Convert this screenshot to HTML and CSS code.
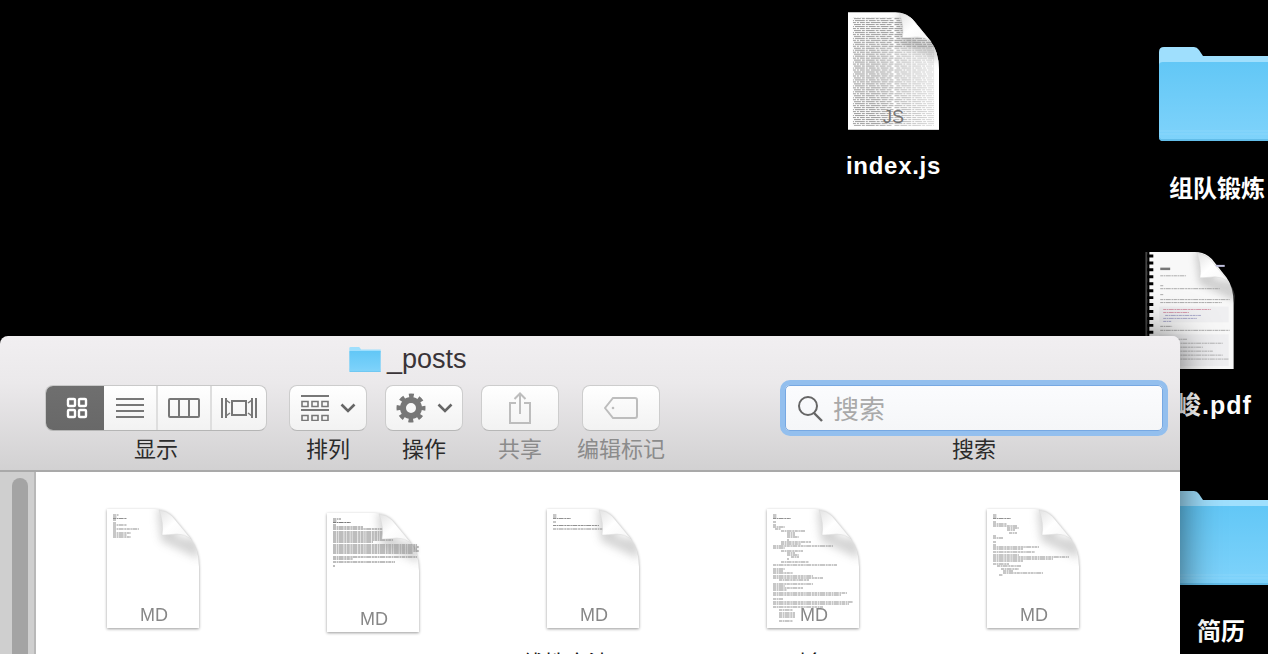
FILE: index.html
```html
<!DOCTYPE html>
<html lang="zh">
<head>
<meta charset="utf-8">
<title>_posts</title>
<link rel="stylesheet" href="styles.css">
</head>
<body>
<svg class="defs" width="0" height="0" aria-hidden="true">
  <defs>
    <linearGradient id="folderFront" x1="0" y1="0" x2="0" y2="1">
      <stop offset="0" stop-color="#62c7f6"/><stop offset="1" stop-color="#7fd3fb"/>
    </linearGradient>
    <linearGradient id="foldFill" x1="0" y1="0" x2="1" y2="1">
      <stop offset="0" stop-color="#e2e2e2"/><stop offset="0.45" stop-color="#ffffff"/><stop offset="1" stop-color="#f6f6f6"/>
    </linearGradient>
    <linearGradient id="codeFade" x1="0" y1="0" x2="1" y2="0">
      <stop offset="0.3" stop-color="#fff" stop-opacity="0"/><stop offset="1" stop-color="#fff" stop-opacity=".7"/>
    </linearGradient>
    <filter id="soft" x="-40%" y="-40%" width="180%" height="180%"><feGaussianBlur stdDeviation="4"/></filter>
    <clipPath id="pageClip"><path d="M0 0H48Q58 0 65 7L83 29Q92 40 92 58V119H0Z"/></clipPath>
    <pattern id="denseCode" width="47" height="6" patternUnits="userSpaceOnUse">
      <rect width="47" height="6" fill="#fff"/>
      <path d="M0 .6h5m1 0h7m1 0h3m1 0h9m1 0h3m1 0h6m1 0h5M2 2.600h4m1 0h10m1 0h2m1 0h7m1 0h3m1 0h8m1 0h4M0 4.600h8m1 0h2m1 0h5m1 0h4m1 0h10m1 0h6m1 0h5" stroke="#7c7c7c" stroke-width=".8"/>
    </pattern>
    <symbol id="folder" viewBox="0 0 118 94">
      <path d="M0 5Q0 0 5 0H35Q38 0 40 3L44 9H118V20H0Z" fill="#9fdffd"/>
      <path d="M0 18Q0 15 4 15H118V94H4Q0 94 0 90Z" fill="url(#folderFront)"/>
      <path d="M0 84H118M0 87H118" stroke="#8ad6fb" stroke-width="1"/>
      <path d="M0 90Q0 94 4 94H118V92H2Z" fill="#62bde9"/>
    </symbol>
    <symbol id="page" viewBox="0 0 92 119">
      <path d="M0 0H48Q58 0 65 7L83 29Q92 40 92 58V119H0Z" fill="#fff"/>
    </symbol>
    <symbol id="fold" viewBox="0 0 92 119">
      <g clip-path="url(#pageClip)">
        <path d="M50 0H70V28L92 30V50L54 32Z" fill="#9a9a9a" opacity=".42" filter="url(#soft)"/>
      </g>
      <path d="M52 1Q60 2 65 7L84 30Q78 25 70 25Q60 26 55 26Q57 14 52 1Z" fill="url(#foldFill)" stroke="#d8d8d8" stroke-width=".5"/>
    </symbol>
  </defs>
</svg>

<main class="desktop">
  <figure class="item item-js">
    <svg class="js-art" viewBox="0 0 92 119">
      <path d="M0 0H48Q58 0 65 7L83 29Q92 40 92 58V119H0Z" fill="#fff"/>
      <g clip-path="url(#pageClip)">
        <rect x="5" y="5" width="82" height="110" fill="url(#denseCode)"/>
        <rect x="0" y="36" width="92" height="83" fill="url(#codeFade)"/>
      </g>
      <use href="#fold" width="92" height="119"/>
    </svg>
    <span class="js-ext">JS</span>
    <figcaption class="item-name name-js">index.js</figcaption>
  </figure>

  <figure class="item item-f1">
    <svg class="folder-art"><use href="#folder"/></svg>
    <figcaption class="item-name name-f1">组队锻炼</figcaption>
  </figure>

  <figure class="item item-pdf">
    <svg class="pdf-art" viewBox="0 0 90 119">
      <path d="M4 0H50Q60 0 67 7L82 26Q89 36 89 52V118H4Z" fill="#f8f8f8"/>
      <path d="M1 0V118" stroke="#444" stroke-width="2"/>
      <path d="M2 4h6M2 11h6M2 18h6M2 25h6M2 32h6M2 39h6M2 46h6M2 53h6M2 60h6M2 67h6M2 74h6M2 81h6M2 88h6M2 95h6M2 102h6M2 109h6" stroke="#000" stroke-width="3"/>
      <path d="M15 17h10" stroke="#777" stroke-width="2.500"/>
      <path class="code" d="M15 24h26M15 34h3M15 37h60M15 43h3M15 48h70M15 51h62M15 75h12M15 79h70" stroke="#777"/>
      <path d="M62 14h18" stroke="#c2c2de" stroke-width="2"/>
      <rect x="14" y="55" width="70" height="16" fill="#efeff1"/>
      <path class="code" d="M18 58h48M18 61h26" stroke="#c4627f"/>
      <path class="code" d="M20 64h36M18 67h34M18 70h8" stroke="#7a7ab0"/>
      <rect x="14" y="83" width="70" height="32" fill="#efeff1"/>
      <path class="code" d="M18 88h24M18 92h60M18 96h40M18 100h50M18 104h60M18 108h66" stroke="#888"/>
      <use href="#fold" width="92" height="119"/>
    </svg>
    <figcaption class="item-name name-pdf">峻.pdf</figcaption>
  </figure>

  <figure class="item item-f2">
    <svg class="folder-art"><use href="#folder"/></svg>
    <figcaption class="item-name name-f2">简历</figcaption>
  </figure>

  <section class="window">
    <header class="toolbar">
      <div class="title">
        <svg class="title-folder"><use href="#folder"/></svg>
        <span>_posts</span>
      </div>
      <div class="tools">
        <div class="group group-view">
          <div class="segments">
            <span class="seg seg-on seg-a">
              <svg width="22" height="22" viewBox="0 0 22 22" fill="none" stroke="#fff" stroke-width="2.400"><rect x="2" y="2" width="7" height="7" rx="1"/><rect x="13" y="2" width="7" height="7" rx="1"/><rect x="2" y="13" width="7" height="7" rx="1"/><rect x="13" y="13" width="7" height="7" rx="1"/></svg>
            </span>
            <span class="seg seg-b">
              <svg width="28" height="22" viewBox="0 0 28 22" stroke="#777" stroke-width="2"><path d="M0 2H28M0 8H28M0 14H28M0 20H28"/></svg>
            </span>
            <span class="seg seg-c">
              <svg width="32" height="20" viewBox="0 0 32 20" fill="none" stroke="#777" stroke-width="2"><rect x="1" y="1" width="30" height="18" rx="1"/><path d="M11 1V19M21 1V19"/></svg>
            </span>
            <span class="seg seg-d">
              <svg width="36" height="22" viewBox="0 0 36 22" fill="none" stroke="#777" stroke-width="2"><rect x="11" y="4" width="14" height="14"/><path d="M1 1V21M5 1V21M31 1V21M35 1V21"/><path d="M5 3L9 6M5 19L9 16M31 3L27 6M31 19L27 16" stroke-width="1.500"/></svg>
            </span>
          </div>
          <span class="label">显示</span>
        </div>
        <div class="group group-sort">
          <div class="btn">
            <svg width="28" height="26" viewBox="0 0 28 26" fill="none" stroke="#777"><path d="M0 1H28M0 15H28" stroke-width="2"/><path d="M1 6.500h6v5H1zM11 6.500h6v5h-6zM21 6.500h6v5h-6zM1 20.500h6v5H1zM11 20.500h6v5h-6zM21 20.500h6v5h-6z" stroke-width="1.600"/></svg>
            <svg class="chev" width="16" height="10" viewBox="0 0 16 10" fill="none" stroke="#666" stroke-width="2.600"><path d="M1.500 1.500L8 8l6.500-6.500"/></svg>
          </div>
          <span class="label">排列</span>
        </div>
        <div class="group group-action">
          <div class="btn">
            <svg width="30" height="30" viewBox="0 0 30 30" fill="none" stroke="#777"><circle cx="15" cy="15" r="8" stroke-width="6"/><circle cx="15" cy="15" r="11.500" stroke-width="6" stroke-dasharray="4.500 4.530" stroke-dashoffset="2.250"/></svg>
            <svg class="chev" width="16" height="10" viewBox="0 0 16 10" fill="none" stroke="#666" stroke-width="2.600"><path d="M1.500 1.500L8 8l6.500-6.500"/></svg>
          </div>
          <span class="label">操作</span>
        </div>
        <div class="group group-share">
          <div class="btn">
            <svg width="22" height="32" viewBox="0 0 22 32" fill="none" stroke="#bdbdbd" stroke-width="2"><path d="M7 11H1V31H21V11H15"/><path d="M11 22V2M5.500 7L11 1.500L16.500 7"/></svg>
          </div>
          <span class="label label-off">共享</span>
        </div>
        <div class="group group-tag">
          <div class="btn btn-tag">
            <svg width="34" height="22" viewBox="0 0 34 22" fill="none" stroke="#bdbdbd" stroke-width="2"><path d="M9 1H31Q33 1 33 3V19Q33 21 31 21H9L1 11Z"/><circle cx="9" cy="11" r="1.300" fill="#bdbdbd" stroke="none"/></svg>
          </div>
          <span class="label label-off">编辑标记</span>
        </div>
        <div class="group group-search">
          <div class="search">
            <svg width="26" height="28" viewBox="0 0 26 28" fill="none" stroke="#666" stroke-width="2"><circle cx="11" cy="12" r="9"/><path d="M17 19L25 27" stroke-width="2.400"/></svg>
            <span class="placeholder">搜索</span>
          </div>
          <span class="label">搜索</span>
        </div>
      </div>
    </header>
    <div class="content">
      <div class="rail-left"><div class="thumb"></div></div>
      <div class="files">
        <article class="file">
          <div class="doc">
            <svg class="doc-art" viewBox="0 0 92 119"><use href="#page" width="92" height="119"/>
              <path class="code" d="M6 6h6M6 8h4M6 9.500h14M6 11h3M6 14h3M6 16h14M6 18h3M6 20h26M6 22h3M6 24h18M6 26h14M6 28h18" stroke="#444"/>
              <use href="#fold" width="92" height="119"/></svg>
            <span class="doc-ext">MD</span>
          </div>
        </article>
        <article class="file file-low">
          <div class="doc">
            <svg class="doc-art" viewBox="0 0 92 119"><use href="#page" width="92" height="119"/>
              <path class="code" d="M6 6h8M6 8h4M6 9.500h18M6 12h3M6 14h30M6 16h60M6 19h60M6 21h62M6 23h58M6 25h50M6 27h60M6 29h40M6 32h84M6 34h86M6 36h84M6 38h86M6 40h80M6 44h84M6 46h20M6 49h62M6 53h2" stroke="#222"/>
              <use href="#fold" width="92" height="119"/></svg>
            <span class="doc-ext">MD</span>
          </div>
        </article>
        <article class="file">
          <div class="doc">
            <svg class="doc-art" viewBox="0 0 92 119"><use href="#page" width="92" height="119"/>
              <path class="code" d="M6 6h4M6 8h4M6 9.500h18M6 13h3M6 16.500h46M6 20h58" stroke="#444"/>
              <use href="#fold" width="92" height="119"/></svg>
            <span class="doc-ext">MD</span>
          </div>
          <span class="file-name name-a">线性方法</span>
        </article>
        <article class="file">
          <div class="doc">
            <svg class="doc-art" viewBox="0 0 92 119"><use href="#page" width="92" height="119"/>
              <path class="code" d="M6 6h4M6 8h4M6 9.500h18M6 13h3M6 16h3M6 18h12M8 20h6M14 22h24M20 24h8M20 26h8M20 28h12M20 31h2M14 33h30M14 35h20M6 37h60M6 39h12M14 42h22M20 44h8M20 46h12M24 48h8M20 50h2M14 53h28M6 56h64M6 60h12M6 62h10M6 64h20M6 67h40M6 69h50M12 71h30M6 75h40M6 77h12M6 79h30M6 81h14M6 84h74M6 86h68M6 90h10M6 93h80M6 95h76M6 98h50M12 101h14M12 104h16M12 106h16M12 108h16M12 112h14" stroke="#444"/>
              <use href="#fold" width="92" height="119"/></svg>
            <span class="doc-ext">MD</span>
          </div>
          <span class="file-name name-b">对象</span>
        </article>
        <article class="file">
          <div class="doc">
            <svg class="doc-art" viewBox="0 0 92 119"><use href="#page" width="92" height="119"/>
              <path class="code" d="M6 6h4M6 8h4M6 9.500h18M6 13h3M6 15h14M6 17h24M20 19h12M20 21h8M22 24h8M6 27h3M6 29h10M6 33h3M6 36h3M6 38h46M6 40h30M6 43h42M6 46h26M6 48h76M6 50h60M6 52h30M6 55h16M10 57h24M14 60h18M16 62h10M16 64h40M12 66h4" stroke="#444"/>
              <use href="#fold" width="92" height="119"/></svg>
            <span class="doc-ext">MD</span>
          </div>
        </article>
      </div>
      <div class="rail-right"></div>
    </div>
  </section>
</main>
</body>
</html>
```

FILE: styles.css
```css
* { box-sizing: border-box; }

html, body {
  margin: 0;
  width: 1268px;
  height: 654px;
  overflow: hidden;
  background: #000;
  font-family: "Liberation Sans", "Noto Sans CJK SC", sans-serif;
}

.defs { position: absolute; }

.code {
  fill: none;
  stroke-width: .6;
  stroke-dasharray: 3 .6 1.5 .5 5 .7 2 .5;
}

.desktop {
  position: relative;
  width: 1268px;
  height: 654px;
  overflow: hidden;
  background: #000;
}

/* desktop icons sit on a free canvas */
.item { position: absolute; margin: 0; }
.item-js { left: 848px; top: 12px; width: 91px; height: 175px; }
.item-f1 { left: 1159px; top: 47px; width: 118px; height: 160px; }
.item-pdf { left: 1145px; top: 252px; width: 90px; height: 170px; }
.item-f2 { left: 1159px; top: 491px; width: 118px; height: 160px; }

.js-art { display: block; width: 91px; height: 118px; }
.pdf-art { display: block; width: 90px; height: 118px; }
.folder-art { display: block; width: 118px; height: 94px; }

.js-ext {
  position: absolute;
  left: 35px;
  top: 94px;
  font-size: 18px;
  line-height: 22px;
  color: #777;
}

.item-name {
  position: absolute;
  color: #fff;
  white-space: nowrap;
  font-weight: 700;
  line-height: 30px;
}
.name-js { left: -2px; top: 139px; font-size: 24px; letter-spacing: .7px; }
.name-f1 { left: 10px; top: 127px; font-size: 24px; }
.name-pdf { left: 31px; top: 138px; font-size: 25px; letter-spacing: 1px; }
.name-f2 { left: 38px; top: 126px; font-size: 24px; }

/* finder window */
.window {
  position: absolute;
  left: 0;
  top: 336px;
  width: 1180px;
  height: 318px;
  display: flex;
  flex-direction: column;
  border-radius: 8px 8px 0 0;
  overflow: hidden;
  box-shadow: 0 0 40px rgba(0, 0, 0, .6);
}

.toolbar {
  height: 136px;
  flex: none;
  background: linear-gradient(#f1eff1, #ebe9eb 35%, #d2d1d2);
  border-bottom: 2px solid #a9a9a9;
  color: #2a2a2a;
}

.title {
  display: flex;
  align-items: center;
  gap: 6px;
  height: 46px;
  margin-bottom: 3px;
  padding-left: 349px;
  font-size: 27px;
  line-height: 32px;
  color: #3a3438;
}
.title-folder { width: 32px; height: 25px; }

.tools {
  display: flex;
  align-items: flex-start;
  padding-left: 45px;
}

.group { display: flex; flex-direction: column; align-items: center; flex: none; }
.group-view { width: 222px; }
.group-sort { width: 78px; margin-left: 22px; }
.group-action { width: 78px; margin-left: 18px; }
.group-share { width: 78px; margin-left: 18px; }
.group-tag { width: 88px; margin-left: 18px; }
.group-search { width: 378px; margin-left: 120px; }

.label {
  margin-top: 1px;
  font-family: "Noto Sans CJK SC", sans-serif;
  font-size: 22px;
  line-height: 30px;
  color: #2b2b2b;
}
.label-off { color: #8b8b8b; }

.segments {
  display: flex;
  width: 222px;
  height: 46px;
  border: 1px solid #c9c9c9;
  border-bottom-color: #b5b5b5;
  border-radius: 8px;
  overflow: hidden;
  background: linear-gradient(#fff, #f2f2f2);
}
.seg {
  display: flex;
  align-items: center;
  justify-content: center;
  border-right: 2px solid #dedede;
}
.seg-a { width: 59px; padding-left: 4px; border-right: 0; }
.seg-b { width: 54px; }
.seg-c { width: 54px; }
.seg-d { flex: 1; border-right: 0; }
.seg-on { background: linear-gradient(#6f6f6f, #686868); margin: -1px 0 -1px -1px; }

.btn {
  display: flex;
  align-items: center;
  justify-content: center;
  gap: 11px;
  width: 78px;
  height: 46px;
  border: 1px solid #cdcdcd;
  border-bottom-color: #b7b7b7;
  border-radius: 8px;
  background: linear-gradient(#fff, #f2f2f2);
}
.group-tag .btn { gap: 0; }
.chev { flex: none; }

.search {
  display: flex;
  align-items: center;
  gap: 10px;
  width: 378px;
  height: 46px;
  padding: 0 0 0 11px;
  border: 1px solid #77a8e2;
  border-radius: 5px;
  background: linear-gradient(#fbfcfe, #f5f6f8);
  box-shadow: 0 0 0 5px #93bfee;
}
.placeholder {
  font-family: "Noto Sans CJK SC", sans-serif;
  font-size: 26px;
  line-height: 32px;
  color: #a9a9a9;
}

.content {
  flex: 1;
  display: flex;
  min-height: 0;
  background: #fff;
}

.rail-left {
  width: 36px;
  flex: none;
  padding: 6px 0 0 12px;
  background: #cfcfcf;
  border-right: 2px solid #b8b8b8;
}
.thumb {
  width: 16px;
  height: 200px;
  border-radius: 8px 8px 0 0;
  background: #a4a4a4;
}

.files {
  flex: 1;
  display: grid;
  grid-template-columns: repeat(5, 220px);
  align-content: start;
  padding: 37px 0 0 71px;
}

.file { display: flex; flex-direction: column; align-items: flex-start; }
.file-low { padding-top: 4px; }

.doc {
  position: relative;
  width: 92px;
  height: 119px;
  filter: drop-shadow(0 1px 1.5px rgba(0, 0, 0, .4));
}
.doc-art { display: block; width: 92px; height: 119px; }
.doc-ext {
  position: absolute;
  left: 2px;
  right: 0;
  bottom: 2px;
  text-align: center;
  font-size: 18px;
  line-height: 22px;
  color: #878787;
}

.file-name {
  margin-top: 18px;
  white-space: nowrap;
  font-family: "Noto Sans CJK SC", sans-serif;
  font-size: 22px;
  line-height: 30px;
  color: #111;
}
.name-a { margin-left: -25px; }
.name-b { margin-left: 18px; }

.rail-right {
  width: 30px;
  flex: none;
  background: #f8f8f8;
  border-left: 1px solid #e6e6e6;
}
```
